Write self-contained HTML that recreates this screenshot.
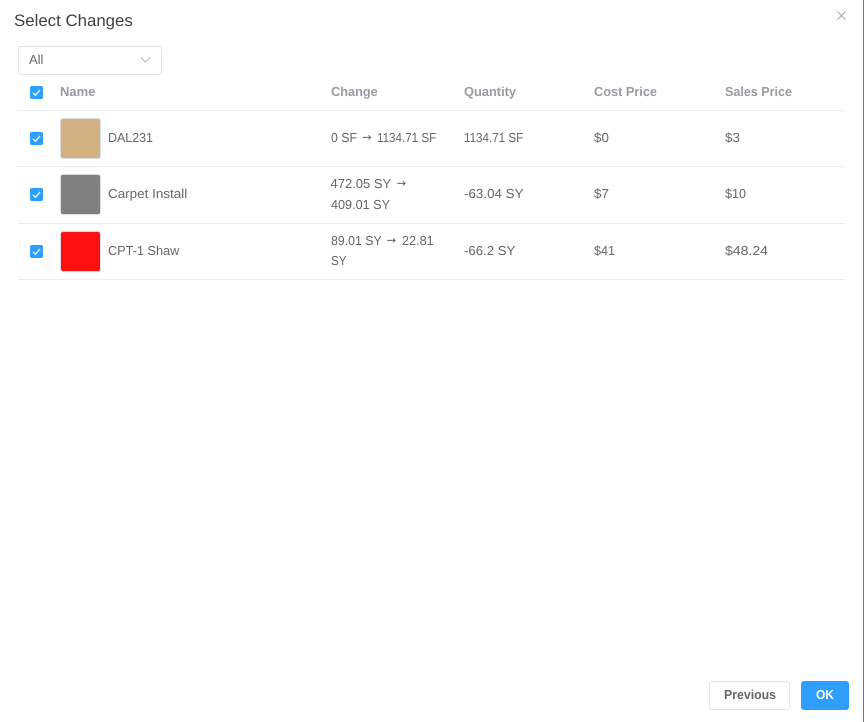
<!DOCTYPE html>
<html><head><meta charset="utf-8"><style>
html,body{margin:0;padding:0;background:#fff;width:864px;height:722px;overflow:hidden}
body{position:relative;font-family:"Liberation Sans",sans-serif;color:#66666e;text-rendering:geometricPrecision}
.t{position:absolute;white-space:nowrap;font-size:13px;line-height:20px;transform-origin:0 50%}
.a{font-family:"DejaVu Sans",sans-serif;font-size:11.500px}
.h{font-weight:bold;color:#9a9aa2}
.l{position:absolute;left:18px;width:827px;height:1px;background:#ebebf3}
.c{position:absolute;left:30px;width:13px;height:13px;border-radius:2px;background:#2e9eff}
.c svg{position:absolute;left:0;top:0}
.s{position:absolute;left:60px;width:39px;height:39px;border:1px solid #dcdce4;border-radius:3px}
</style></head><body>
<div class="t" style="left:14px;top:10.500px;font-size:16.500px;color:#3f3f46;transform:scaleX(1.02)">Select Changes</div>
<svg style="position:absolute;left:836px;top:10px" width="11" height="11"><path d="M1.500 1.500L9.500 9.500M9.500 1.500L1.500 9.500" stroke="#a4a4ac" stroke-width=".9" fill="none"/></svg>
<div style="position:absolute;left:18px;top:46px;width:142px;height:27px;border:1px solid #e2e2ea;border-radius:3px"></div>
<div class="t" style="left:29px;top:50px">All</div>
<svg style="position:absolute;left:140px;top:56px" width="11" height="8"><path d="M1 1.500L5.500 6L10 1.500" stroke="#b4b4bc" stroke-width=".9" fill="none"/></svg>

<div class="c" style="top:86px"><svg width="13" height="13"><path d="M3 6.800L5.500 9.200L10 4" stroke="#dcefff" stroke-width="1.500" fill="none"/></svg></div>
<div class="t h" style="left:60px;top:82px">Name</div>
<div class="t h" style="left:330.500px;top:82px;transform:scaleX(.98)">Change</div>
<div class="t h" style="left:463.500px;top:82px;transform:scaleX(.987)">Quantity</div>
<div class="t h" style="left:594px;top:82px;transform:scaleX(.98)">Cost Price</div>
<div class="t h" style="left:724.500px;top:82px;transform:scaleX(.965)">Sales Price</div>
<div class="l" style="top:110px"></div>

<div class="c" style="top:132px"><svg width="13" height="13"><path d="M3 6.800L5.500 9.200L10 4" stroke="#dcefff" stroke-width="1.500" fill="none"/></svg></div>
<div class="s" style="top:118px;background:#d2b183"></div>
<div class="t" style="left:108px;top:128px;transform:scaleX(.957)">DAL231</div>
<div class="t" style="left:330.500px;top:128px;transform:scaleX(.946)">0 SF</div>
<div class="t a" style="left:362px;top:127px">→</div>
<div class="t" style="left:376.500px;top:128px;transform:scaleX(.893)">1134.71 SF</div>
<div class="t" style="left:463.500px;top:128px;transform:scaleX(.893)">1134.71 SF</div>
<div class="t" style="left:594px;top:128px;transform:scaleX(1.03)">$0</div>
<div class="t" style="left:725px;top:128px;transform:scaleX(1.03)">$3</div>
<div class="l" style="top:166px"></div>

<div class="c" style="top:188px"><svg width="13" height="13"><path d="M3 6.800L5.500 9.200L10 4" stroke="#dcefff" stroke-width="1.500" fill="none"/></svg></div>
<div class="s" style="top:174px;background:#808080"></div>
<div class="t" style="left:108px;top:184px;transform:scaleX(1.034)">Carpet Install</div>
<div class="t" style="left:330.500px;top:174px">472.05 SY</div>
<div class="t a" style="left:396.500px;top:173px">→</div>
<div class="t" style="left:330.500px;top:195px;transform:scaleX(.972)">409.01 SY</div>
<div class="t" style="left:463.500px;top:184px;transform:scaleX(1.03)">-63.04 SY</div>
<div class="t" style="left:594px;top:184px;transform:scaleX(1.03)">$7</div>
<div class="t" style="left:725px;top:184px;transform:scaleX(.97)">$10</div>
<div class="l" style="top:223px"></div>

<div class="c" style="top:245px"><svg width="13" height="13"><path d="M3 6.800L5.500 9.200L10 4" stroke="#dcefff" stroke-width="1.500" fill="none"/></svg></div>
<div class="s" style="top:231px;background:#ff1010"></div>
<div class="t" style="left:108px;top:241px;transform:scaleX(.977)">CPT-1 Shaw</div>
<div class="t" style="left:330.500px;top:231px;transform:scaleX(.948)">89.01 SY</div>
<div class="t a" style="left:386.500px;top:230px">→</div>
<div class="t" style="left:401.500px;top:231px;transform:scaleX(.975)">22.81</div>
<div class="t" style="left:330.500px;top:251px;transform:scaleX(.9)">SY</div>
<div class="t" style="left:463.500px;top:241px;transform:scaleX(1.014)">-66.2 SY</div>
<div class="t" style="left:594px;top:241px;transform:scaleX(.97)">$41</div>
<div class="t" style="left:725px;top:241px;transform:scaleX(1.08)">$48.24</div>
<div class="l" style="top:279px"></div>

<div style="position:absolute;left:709px;top:681px;width:79px;height:27px;border:1px solid #e2e2ea;border-radius:3px"></div>
<div class="t" style="left:724px;top:685px;font-weight:bold;transform:scaleX(.947)">Previous</div>
<div style="position:absolute;left:801px;top:681px;width:48px;height:29px;background:#2e9eff;border-radius:3px"></div>
<div class="t" style="left:816px;top:685px;font-weight:bold;color:#fff;transform:scaleX(.92)">OK</div>
<div style="position:absolute;left:863px;top:0;width:1px;height:722px;background:#77777a"></div>
</body></html>
